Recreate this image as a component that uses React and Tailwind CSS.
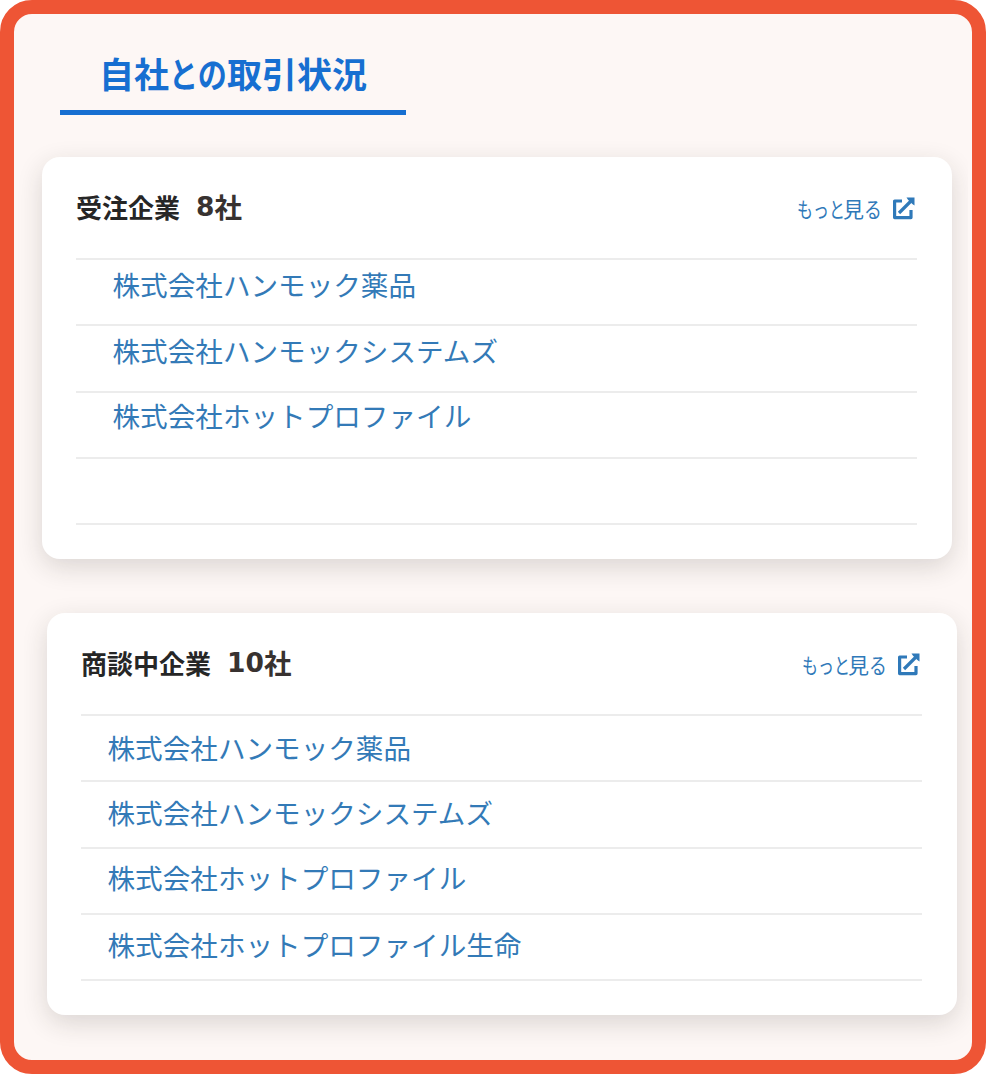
import clsx from 'clsx';

const wonCompanies = [
  { name: '株式会社ハンモック薬品', pad: 'pt-[4px]' },
  { name: '株式会社ハンモックシステムズ', pad: 'pt-[4px]' },
  { name: '株式会社ホットプロファイル', pad: 'pt-[2px]' },
  { name: '', pad: 'pt-[4px]' },
];

const activeCompanies = [
  { name: '株式会社ハンモック薬品', pad: 'pt-[11px]' },
  { name: '株式会社ハンモックシステムズ', pad: 'pt-[10px]' },
  { name: '株式会社ホットプロファイル', pad: 'pt-[8px]' },
  { name: '株式会社ホットプロファイル生命', pad: 'pt-[9px]' },
];

function ExternalIcon() {
  return (
    <svg width="23" height="23" viewBox="0 0 23 23" fill="none" stroke="#2f79b9" strokeWidth="3.2">
      <path d="M10 4H2.6V20.6H19V13" strokeLinejoin="round" />
      <path d="M7 16L18.5 4.5" />
      <path d="M14.5 0.5H22.5V8.5L20.3 7L16 2.7Z" fill="#2f79b9" stroke="none" />
    </svg>
  );
}

function CompanyCard({ title, count, companies, className, indent }) {
  return (
    <section
      className={clsx(
        'h-[402px] w-[910px] rounded-[18px] bg-white pl-[34px] pr-[35px]',
        'shadow-[0_8px_26px_rgba(40,35,30,0.16)]',
        className
      )}
    >
      <div className="flex h-[101px] items-center justify-between">
        <h2 className="flex items-center pb-[2px] font-bold text-[#262626]">
          <span className="text-[26px] leading-[40px]">{title}</span>
          <span className="ml-[16px] flex items-center pb-[2px] text-[27.5px] leading-[40px] text-[#383230]">
            <span className="pt-[2px] font-['DejaVu_Sans'] text-[26.5px]">{count}</span>社
          </span>
        </h2>
        <a href="#" className="flex items-center text-[21px] leading-[30px] text-[#2f79b9]">
          <span className="flex">
            <span className="w-[46px] origin-left scale-x-[0.76] whitespace-nowrap">もっと</span>
            <span>見</span>
            <span className="w-[17px] origin-left scale-x-[0.85]">る</span>
          </span>
          <span className="ml-[11px] mr-[2px] pt-[2px]">
            <ExternalIcon />
          </span>
        </a>
      </div>

      <ul className="border-t-2 border-[#ececec]">
        {companies.map((company, index) => (
          <li
            key={index}
            className={clsx('h-[66.25px] border-b-2 border-[#ececec]', indent, company.pad)}
          >
            <a href="#" className="block text-[27.6px] leading-[40px] text-[#337ab7]">
              {company.name}
            </a>
          </li>
        ))}
      </ul>
    </section>
  );
}

export default function App() {
  return (
    <div className="h-[1074px] w-[986px] bg-white font-['Noto_Sans_CJK_JP',sans-serif]">
      <main className="h-full overflow-hidden rounded-[32px] border-[14px] border-[#ee5535] bg-[#fdf7f5]">
        <h1 className="ml-[46px] mt-[32px] flex h-[69px] w-[346px] border-b-[5px] border-[#176fd1] pl-[39px] text-[35px] font-bold leading-[53px] whitespace-nowrap text-[#176fd1]">
          <span>自社</span>
          <span className="w-[58px] origin-left scale-x-[0.83]">との</span>
          <span>取引状況</span>
        </h1>

        <CompanyCard
          title="受注企業"
          count={8}
          companies={wonCompanies}
          indent="pl-[36.5px]"
          className="ml-[28px] mt-[42px] [clip-path:inset(-40px_-16px_-50px_-40px)]"
        />
        <CompanyCard
          title="商談中企業"
          count={10}
          companies={activeCompanies}
          indent="pl-[26.5px]"
          className="ml-[33px] mt-[54px] [clip-path:inset(-40px_-40px_-50px_-23px)]"
        />
      </main>
    </div>
  );
}
